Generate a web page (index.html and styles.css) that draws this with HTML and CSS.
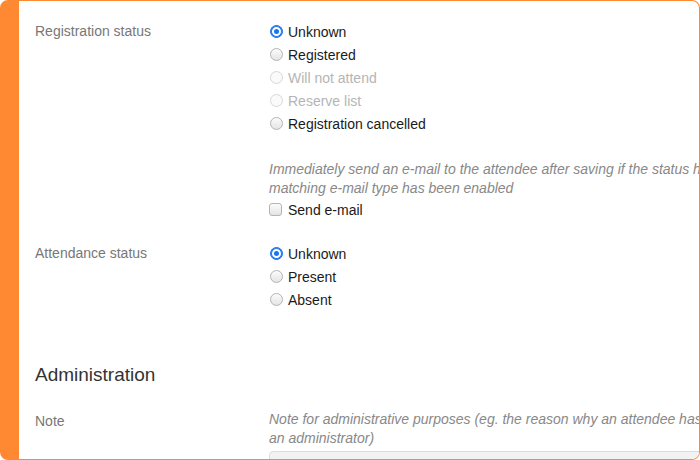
FILE: index.html
```html
<!DOCTYPE html>
<html lang="en">
<head>
    <meta charset="UTF-8">
    <meta name="viewport" content="width=device-width, initial-scale=1.0">
    <title>Attendee</title>
    <link rel="stylesheet" href="styles.css">
</head>
<body>

<div class="card">
    <form class="attendeeForm">

        <!-- Registration status -->
        <div class="formGroup">
            <div class="formLabel">Registration status</div>
            <div class="formValue">
                <label class="option"><input type="radio" name="registration" checked> Unknown</label>
                <label class="option"><input type="radio" name="registration"> Registered</label>
                <label class="option disabled"><input type="radio" name="registration" disabled> Will not attend</label>
                <label class="option disabled"><input type="radio" name="registration" disabled> Reserve list</label>
                <label class="option"><input type="radio" name="registration"> Registration cancelled</label>

                <p class="helpText spaced">Immediately send an e-mail to the attendee after saving if the status has changed and the matching e-mail type has been enabled</p>
                <label class="option"><input type="checkbox" name="sendEmail"> Send e-mail</label>
            </div>
        </div>

        <!-- Attendance status -->
        <div class="formGroup">
            <div class="formLabel">Attendance status</div>
            <div class="formValue">
                <label class="option"><input type="radio" name="attendance" checked> Unknown</label>
                <label class="option"><input type="radio" name="attendance"> Present</label>
                <label class="option"><input type="radio" name="attendance"> Absent</label>
            </div>
        </div>

        <h2 class="sectionTitle">Administration</h2>

        <!-- Note -->
        <div class="formGroup">
            <div class="formLabel">Note</div>
            <div class="formValue">
                <p class="helpText">Note for administrative purposes (eg. the reason why an attendee has been registered by an administrator)</p>
                <textarea class="noteField" rows="4"></textarea>
            </div>
        </div>

    </form>
</div>

</body>
</html>
```

FILE: styles.css
```css
body {
    margin: 0;
    font-family: "Liberation Sans", Arial, sans-serif;
    font-size: 14px;
    color: #222;
    background: #fff;
}

/* Card with the orange edge */
.card {
    box-sizing: border-box;
    width: 700px;
    height: 460px;
    border: 1px solid #ff8833;
    border-left: 19px solid #ff8833;
    border-radius: 8px;
    overflow: hidden;
    background: #fff;
}

.attendeeForm {
    width: 900px;
    padding: 19px 0 0 16px;
}

.formGroup {
    display: grid;
    grid-template-columns: 234px 560px;
    margin-bottom: 21px;
}

.formLabel {
    color: #777;
    line-height: 23px;
}

.formValue {
    display: flex;
    flex-direction: column;
}

/* Radio and checkbox rows */
.option {
    display: flex;
    align-items: center;
    height: 23px;
    color: #1a1a1a;
}

.option input {
    appearance: none;
    box-sizing: border-box;
    width: 13px;
    height: 13px;
    margin: 0 5px 0 1px;
    border: 1px solid #b4b4b4;
    background: linear-gradient(#fbfbfb, #e4e4e4);
}

.option input[type="radio"] {
    border-radius: 50%;
}

.option input[type="radio"]:checked {
    border-color: #1a73f0;
    background: #1a73f0;
    box-shadow: inset 0 0 0 1px #1a73f0, inset 0 0 0 3px #fff;
}

.option input[type="checkbox"] {
    margin-left: 0;
    margin-right: 6px;
    border-radius: 3px;
}

.option input:disabled {
    border-color: #d8d8d8;
    background: #fafafa;
}

.option.disabled {
    color: #b5b5b5;
}

.helpText {
    margin: 0;
    color: #888;
    font-style: italic;
    line-height: 19px;
}

.helpText.spaced {
    margin-top: 25px;
}

.sectionTitle {
    margin: 53px 0 24px;
    font-size: 19px;
    font-weight: normal;
    color: #333;
}

.noteField {
    margin-top: 3px;
    height: 80px;
    background: #f2f2f2;
    border: 1px solid #ddd;
    border-radius: 4px;
    resize: none;
}
```
